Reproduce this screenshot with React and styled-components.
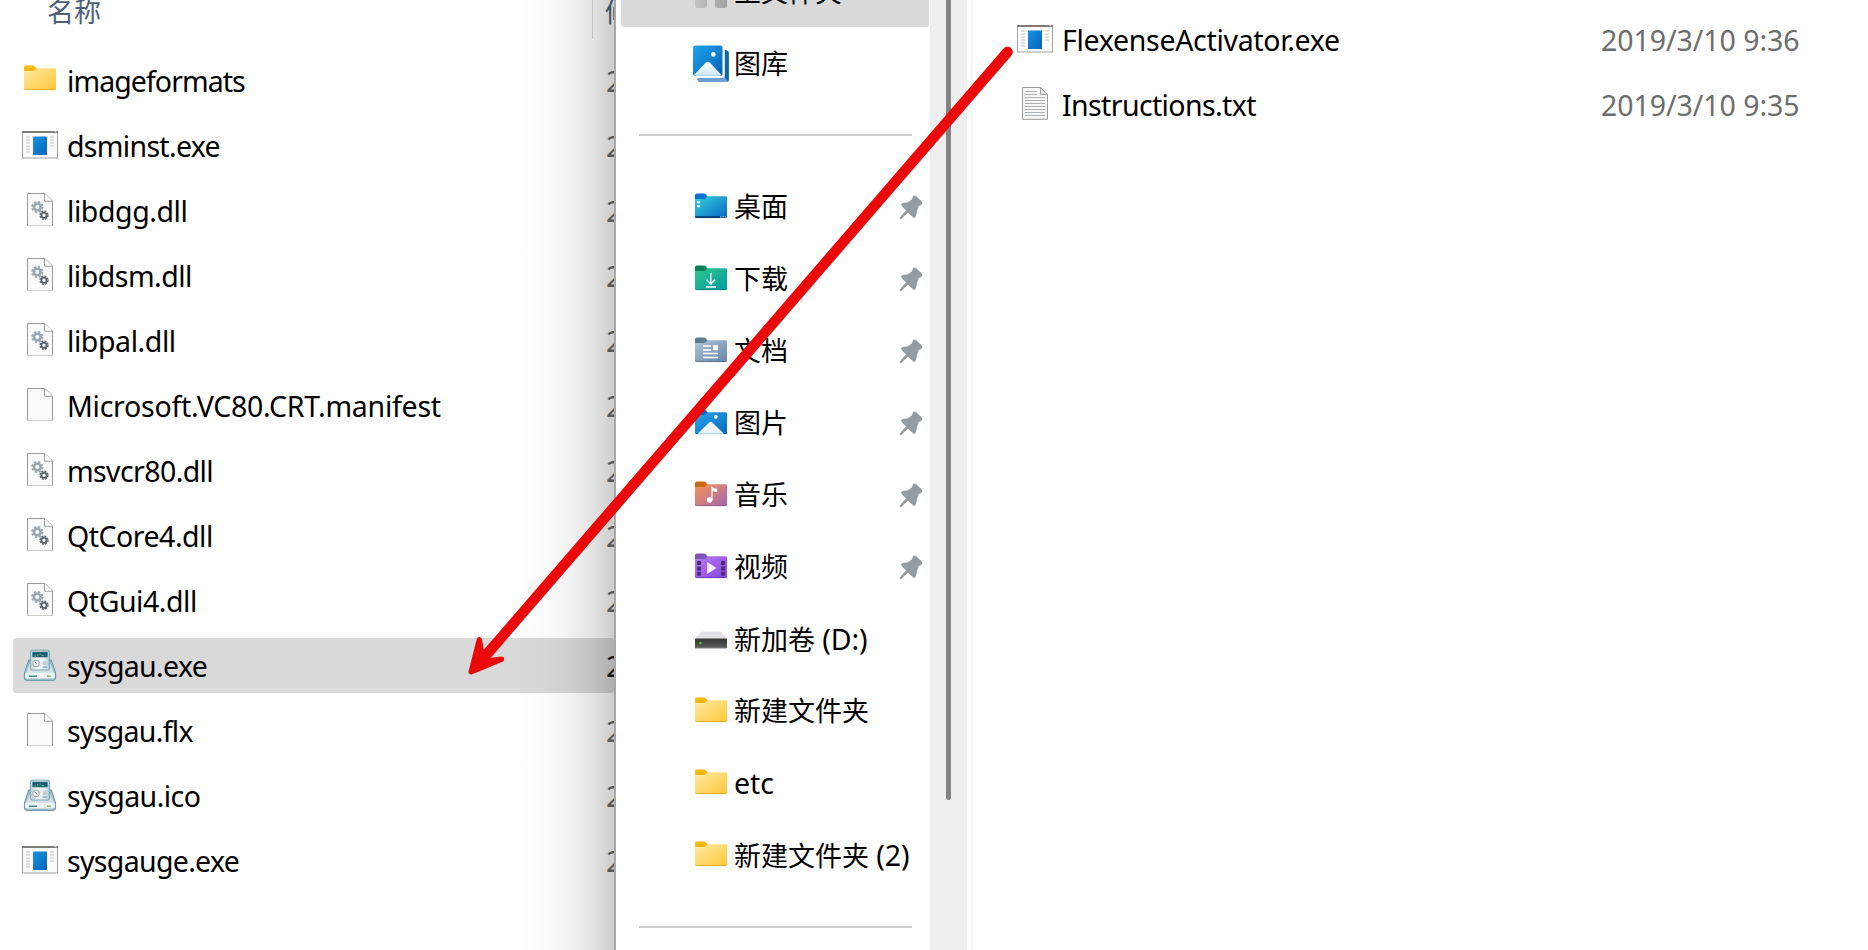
import React from 'react';
import styled, { createGlobalStyle } from 'styled-components';

// styling
const GlobalStyle = createGlobalStyle`
  * {
    box-sizing: border-box;
  }
  body {
    margin: 0;
    overflow: hidden;
    background-color: #ffffff;
    font-family: 'Noto Sans', 'Noto Sans CJK SC', sans-serif;
  }
  svg {
    display: block;
  }
`;
const Desktop = styled.div`
  position: relative;
  display: flex;
  width: 1868px;
  height: 950px;
  overflow: hidden;
  background-color: #ffffff;
`;
const FilesPane = styled.section`
  position: relative;
  flex: 0 0 614px;
  display: flex;
  flex-direction: column;
  overflow: hidden;
`;
const PaneShadow = styled.div`
  position: absolute;
  top: 0;
  right: 0;
  bottom: 0;
  width: 100px;
  background: linear-gradient(to right, rgba(0, 0, 0, 0) 0%, rgba(0, 0, 0, 0.015) 30%, rgba(0, 0, 0, 0.06) 60%, rgba(0, 0, 0, 0.12) 82%, rgba(0, 0, 0, 0.2) 100%);
`;
const HeaderRow = styled.div`
  flex: 0 0 39px;
  display: flex;
  color: #4c607a;
  font-size: 27px;
  line-height: 40px;
`;
const HeaderCell = styled.div`
  flex: 0 0 ${props => props.$width}px;
  margin-top: -8px;
  padding-left: ${props => props.$indent}px;
  border-right: 1px solid #dcdcdc;
  white-space: nowrap;
`;
const FileList = styled.div`
  display: flex;
  flex-direction: column;
  gap: 10px;
  padding: ${props => props.$padding};
`;
const FileRow = styled.div`
  flex: 0 0 55px;
  display: flex;
  align-items: center;
  border-radius: 3px;
  background-color: ${props => props.$selected ? '#d9d9d9' : 'transparent'};
`;
const IconSlot = styled.div`
  flex: 0 0 36px;
  display: flex;
  justify-content: center;
  min-width: 0;
  height: 36px;
  margin-bottom: 5px;
  margin-left: 9px;
  margin-right: 9px;

  svg {
    flex-shrink: 0;
  }
`;
const FileName = styled.div`
  flex: 0 0 ${props => props.$width}px;
  color: #000000;
  font-size: 28.5px;
  line-height: 40px;
  letter-spacing: ${props => props.$tracking || 0}px;
  white-space: nowrap;
`;
const FileDate = styled.div`
  color: ${props => props.$selected ? '#1c1c1c' : '#6d6d6d'};
  font-size: 28.5px;
  line-height: 40px;
  letter-spacing: -0.05px;
  white-space: nowrap;
`;
const Sidebar = styled.nav`
  flex: 0 0 316px;
  display: flex;
  flex-direction: column;
  border-left: 2px solid #a8a8a8;
  background-color: #ffffff;
`;
const NavRow = styled.div`
  flex: 0 0 ${props => props.$height || 72}px;
  display: flex;
  align-items: center;
  margin: ${props => props.$active ? '-43px' : 0} 1px 0 5px;
  padding-left: 71px;
  padding-right: 6px;
  border-radius: 3px;
  background-color: ${props => props.$active ? '#d9d9d9' : 'transparent'};
`;
const NavIcon = styled.div`
  flex: 0 0 38px;
  height: 38px;
`;
const NavLabel = styled.div`
  flex: 1;
  padding-left: 4px;
  color: #000000;
  font-size: 27px;
  line-height: 40px;
  white-space: nowrap;
`;
const Latin = styled.span`
  font-size: 28.5px;
  letter-spacing: -0.1px;
`;
const Divider = styled.hr`
  flex: 0 0 2px;
  width: 273px;
  margin: ${props => props.$margin};
  border: none;
  background-color: #d0d0d0;
`;
const ScrollTrack = styled.div`
  flex: 0 0 37px;
  padding-left: 16px;
  background-color: #efefef;
`;
const ScrollThumb = styled.div`
  width: 5px;
  height: 800px;
  border-radius: 0 0 3px 3px;
  background-color: #838383;
`;
const ActivatorPane = styled.section`
  flex: 1;
  margin-left: 3px;
  border-left: 3px solid #f7f7f7;
`;
const ArrowLayer = styled.svg`
  position: absolute;
  top: 0;
  left: 0;
`;

// icons
const FolderBase = ({ id, tab, from, to, edge, children }) => (
  <svg width="38" height="38" viewBox="0 0 38 38">
    <defs>
      <linearGradient id={id} x1="0" y1="0" x2="1" y2="1">
        <stop offset="0" stopColor={from} />
        <stop offset="1" stopColor={to} />
      </linearGradient>
    </defs>
    <path d="M3 7.2Q3 5.5 4.8 5.5H12Q13.2 5.5 14 6.5L15.3 8.3V12H3Z" fill={tab} />
    <path d="M3 11H12.5Q13.6 11 14.4 9.6L15.2 8.2H33.6Q35 8.2 35 9.6V28.6Q35 30 33.6 30H4.4Q3 30 3 28.6Z" fill={`url(#${id})`} />
    <path d="M3.3 28.6Q3.6 29.6 4.6 29.6H33.4Q34.4 29.6 34.7 28.6" fill="none" stroke={edge} strokeWidth="0.9" />
    {children}
  </svg>
);

const FolderIcon = () => <FolderBase id="folder" tab="#fdb813" from="#ffe9a3" to="#ffc937" edge="#dca32c" />;

const DesktopIcon = () => (
  <FolderBase id="desktop" tab="#0673d1" from="#33d2e3" to="#0a66c0" edge="#0a3c70">
    <path d="M5 13.3h3v2h-3zM5 17.3h3v2h-3z" fill="#ffffff" />
    <path d="M3.5 28.9H34.5" stroke="#093f73" strokeWidth="1.6" />
    <path d="M28 28.8h1.4M30.4 28.8h1.4M32.8 28.8h1.2" stroke="#9fd5f5" strokeWidth="1.2" />
  </FolderBase>
);

const DownloadIcon = () => (
  <FolderBase id="download" tab="#08835c" from="#2fc987" to="#0599a6" edge="#067b7e">
    <path d="M18.8 13V24M14.6 19.8L18.8 24L23 19.8M14 27H24" fill="none" stroke="#ffffff" strokeWidth="1.4" />
  </FolderBase>
);

const DocumentIcon = () => (
  <FolderBase id="document" tab="#5f7d8c" from="#b3c4d8" to="#6484a6" edge="#56748f">
    <path d="M11 14H19M11 18H19M11 21.5H26M11 25.5H26" stroke="#ffffff" strokeWidth="1.6" />
    <rect x="21" y="13.2" width="5" height="5" fill="#ffffff" />
  </FolderBase>
);

const PictureIcon = () => (
  <FolderBase id="picture" tab="#0668c4" from="#28a8ec" to="#0667bd" edge="#075aa3">
    <path d="M5.5 29.8L17.2 18.4Q18.7 17 20.2 18.4L32 29.8Z" fill="#eaf4fd" />
    <circle cx="23.8" cy="12.8" r="1.9" fill="#ffffff" />
  </FolderBase>
);

const MusicIcon = () => (
  <FolderBase id="music" tab="#cc6713" from="#fd9553" to="#a165ae" edge="#93557f">
    <path d="M20 12V24M20 12Q21 15 24.6 15.6V13.4Q21.5 13.4 20 11.4Z" fill="#ffffff" stroke="#ffffff" strokeWidth="1.2" />
    <circle cx="17.6" cy="23.7" r="2.8" fill="#ffffff" />
  </FolderBase>
);

const VideoIcon = () => (
  <FolderBase id="video" tab="#7f55b8" from="#b77af2" to="#8a43e2" edge="#6f33b5">
    <path d="M5 13h4v4h-4zM5 18.4h4v4h-4zM5 23.8h4v4h-4zM29 13h4v4h-4zM29 18.4h4v4h-4zM29 23.8h4v4h-4z" fill="#4b2d7c" />
    <path d="M15.2 14L24.5 20L15.2 26Z" fill="#f3ecfb" />
  </FolderBase>
);

const DriveIcon = () => (
  <svg width="38" height="38" viewBox="0 0 38 38">
    <defs>
      <linearGradient id="drive" x1="0" y1="0" x2="0" y2="1">
        <stop offset="0" stopColor="#333333" />
        <stop offset="1" stopColor="#606060" />
      </linearGradient>
    </defs>
    <path d="M9.5 11.6H28.5L35 18.6H3Z" fill="#dfe0e3" />
    <rect x="3" y="18.5" width="32" height="9.8" rx="0.8" fill="url(#drive)" />
    <path d="M3.3 28.2H34.7" stroke="#a8a8a8" strokeWidth="0.8" />
    <circle cx="8.3" cy="23" r="1.3" fill="#28e02c" />
  </svg>
);

const HomeIcon = () => (
  <svg width="38" height="38" viewBox="0 0 38 38">
    <defs>
      <linearGradient id="home" x1="0" y1="0" x2="1" y2="0">
        <stop offset="0" stopColor="#c4c4c4" />
        <stop offset="1" stopColor="#a2a2a2" />
      </linearGradient>
    </defs>
    <path d="M3 15L19 2L35 15V33Q35 35 33 35H25Q23 35 23 33V22H15V33Q15 35 13 35H5Q3 35 3 33Z" fill="url(#home)" />
  </svg>
);

const GalleryIcon = () => (
  <svg width="38" height="38" viewBox="0 0 38 38">
    <defs>
      <linearGradient id="gallery" x1="0" y1="0" x2="1" y2="1">
        <stop offset="0" stopColor="#1ea5ec" />
        <stop offset="1" stopColor="#0560b6" />
      </linearGradient>
      <linearGradient id="galleryHill" x1="0" y1="0" x2="0" y2="1">
        <stop offset="0" stopColor="#ffffff" />
        <stop offset="1" stopColor="#cfe6fa" />
      </linearGradient>
    </defs>
    <path d="M5.5 33.5H32.5V5Q36.9 5.2 36.9 8V34.5Q36.9 37 34.4 37H8.5Q5.5 37 5.5 33.5Z" fill="#0e62b2" />
    <path d="M5.5 32.8H33L36.3 36.5Q35.6 37 34.4 37H8.5Q5.5 37 5.5 32.8Z" fill="#6b9fd4" />
    <rect x="0" y="0" width="32.6" height="32.8" rx="3" fill="#ffffff" />
    <rect x="1" y="0.4" width="29.5" height="30.4" rx="2.6" fill="url(#gallery)" />
    <path d="M2 30L13.6 17.8Q15.8 15.8 18 17.8L29.5 30Q28.8 30.8 27.5 30.8H4Q2.7 30.8 2 30Z" fill="url(#galleryHill)" />
    <circle cx="21.3" cy="9.4" r="2.3" fill="#ffffff" />
  </svg>
);

const PinIcon = () => (
  <svg width="24" height="25" viewBox="0 0 24 25">
    <path d="M14.6 0.8Q15.8 0 17 1L22.8 6.8Q24 8.2 22.8 9.6Q21.6 10.5 19.8 11L17.8 16.6Q17.6 20 16.4 22.2Q15.4 23.6 14 22.2L8.9 17.4L2.2 24.2Q0.6 24.4 0.5 22.8L7 15.6L2.4 10.6Q1.4 9.4 3 8.6Q5.6 7.4 8 7.6L13 4.6Q13.4 2 14.6 0.8Z" fill="#929ca2" />
  </svg>
);

const ExeIcon = () => (
  <svg width="36" height="36" viewBox="0 0 36 36">
    <defs>
      <linearGradient id="exe" x1="0" y1="0" x2="1" y2="1">
        <stop offset="0" stopColor="#1793e2" />
        <stop offset="1" stopColor="#0561b8" />
      </linearGradient>
    </defs>
    <rect x="0.5" y="6.5" width="35" height="26.5" fill="#fafafa" stroke="#a2a2a2" />
    <path d="M0 7H36" stroke="#7e7c78" strokeWidth="2" />
    <path d="M32.5 6.8h2" stroke="#e0e0e0" strokeWidth="1" />
    <rect x="11" y="11.5" width="14" height="18.5" rx="0.6" fill="url(#exe)" />
    <path d="M4 12H8M4 15H8M4 18H8M4 21H8M4 24H8M4 27H8M28 12H32M28 15H32M28 18H32M28 21H32" stroke="#d8d8d8" strokeWidth="1.5" />
  </svg>
);

const PageIcon = ({ children }) => (
  <svg width="36" height="36" viewBox="0 0 36 36">
    <path d="M5.5 3.5H23L30.5 11V36.4H5.5Z" fill="#fafafa" stroke="#9b9b9b" />
    <path d="M5.2 35.6H30.8" stroke="#c9c9c9" strokeWidth="1" />
    <path d="M22.5 3.5V11.2H30.5" fill="#ffffff" stroke="#9b9b9b" />
    {children}
  </svg>
);

const DllIcon = () => (
  <PageIcon>
    <circle cx="15.3" cy="17" r="3.3" fill="none" stroke="#9aa6b0" strokeWidth="2.6" />
    <circle cx="15.3" cy="17" r="5.2" fill="none" stroke="#9aa6b0" strokeWidth="1.8" strokeDasharray="2.4 1.684" />
    <circle cx="22" cy="25.2" r="2.6" fill="none" stroke="#59636b" strokeWidth="1.8" />
    <circle cx="22" cy="25.2" r="4" fill="none" stroke="#59636b" strokeWidth="1.4" strokeDasharray="1.9 1.242" />
  </PageIcon>
);

const TextIcon = () => (
  <svg width="36" height="36" viewBox="0 0 36 36">
    <path d="M5.5 3.5H23.5L30.5 10.5V35.3H5.5Z" fill="#f6f6f6" stroke="#9b9b9b" />
    <path d="M23.5 3.5V10.5H30.5Z" fill="#e2e2e2" stroke="#a3a3a3" />
    <path d="M8 7.5H20M8 10.5H20M8 13.5H28M8 16.5H28M8 19.5H28M8 22.5H28M8 25.5H28M8 28.5H28M8 31.5H28" stroke="#aab0b3" strokeWidth="1.1" />
  </svg>
);

const GaugeIcon = () => (
  <svg width="36" height="37" viewBox="0 0 36 37">
    <defs>
      <linearGradient id="gauge" x1="0" y1="0" x2="1" y2="0">
        <stop offset="0" stopColor="#bdd2da" />
        <stop offset="0.3" stopColor="#f0f3f4" />
        <stop offset="0.75" stopColor="#e3eaed" />
        <stop offset="1" stopColor="#a9c5d0" />
      </linearGradient>
    </defs>
    <path d="M6.6 15H29.4L33.6 28V33Q33.6 35.4 31.2 35.4H4.8Q2.4 35.4 2.4 33V28Z" fill="#9dbdc9" stroke="#5b93a6" strokeWidth="0.9" />
    <path d="M8 18H28L31.8 27.4H4.2Z" fill="#d5e1e6" />
    <path d="M3.2 29Q3.2 27.4 4.8 27.4H31.2Q32.8 27.4 32.8 29V31.6Q32.8 33.4 31 33.4H5Q3.2 33.4 3.2 31.6Z" fill="#f1f5f6" />
    <rect x="8.4" y="5.2" width="19.2" height="19.8" rx="1.8" fill="url(#gauge)" stroke="#6d9dae" strokeWidth="0.9" />
    <rect x="10.4" y="6.8" width="15.2" height="5.4" rx="0.6" fill="#175f78" />
    <path d="M12.6 11h1.6M15 10h1.4M17.6 9h1.2M19.4 10.6h2.6" stroke="#6fa872" strokeWidth="1.3" />
    <circle cx="14" cy="18.4" r="3.2" fill="#fafafa" stroke="#a3adb2" strokeWidth="1.1" />
    <path d="M12.6 17L14.8 18.5" stroke="#7e8a90" />
    <circle cx="22.6" cy="18.2" r="1.9" fill="#c0c8cc" />
    <path d="M20.6 22H25" stroke="#58a6b8" strokeWidth="1.1" />
    <path d="M7 31.2H15" stroke="#3785a0" strokeWidth="1.5" />
    <path d="M25 31.2H29" stroke="#86c45e" strokeWidth="1.7" />
  </svg>
);

// data
const files = [
  { name: 'imageformats', icon: FolderIcon, tracking: -0.93 },
  { name: 'dsminst.exe', icon: ExeIcon, tracking: -0.68 },
  { name: 'libdgg.dll', icon: DllIcon, tracking: -0.42 },
  { name: 'libdsm.dll', icon: DllIcon, tracking: -0.5 },
  { name: 'libpal.dll', icon: DllIcon, tracking: -0.42 },
  { name: 'Microsoft.VC80.CRT.manifest', icon: PageIcon, tracking: -0.26 },
  { name: 'msvcr80.dll', icon: DllIcon, tracking: -0.6 },
  { name: 'QtCore4.dll', icon: DllIcon, tracking: -0.5 },
  { name: 'QtGui4.dll', icon: DllIcon, tracking: -0.46 },
  { name: 'sysgau.exe', icon: GaugeIcon, tracking: -0.65, selected: true },
  { name: 'sysgau.flx', icon: PageIcon, tracking: -0.7 },
  { name: 'sysgau.ico', icon: GaugeIcon, tracking: -0.55 },
  { name: 'sysgauge.exe', icon: ExeIcon, tracking: -0.68 },
];

const pinned = [
  { label: '桌面', icon: DesktopIcon, pin: true },
  { label: '下载', icon: DownloadIcon, pin: true },
  { label: '文档', icon: DocumentIcon, pin: true },
  { label: '图片', icon: PictureIcon, pin: true },
  { label: '音乐', icon: MusicIcon, pin: true },
  { label: '视频', icon: VideoIcon, pin: true },
  { label: '新加卷', latin: ' (D:)', icon: DriveIcon },
  { label: '新建文件夹', icon: FolderIcon },
  { latin: 'etc', icon: FolderIcon },
  { label: '新建文件夹', latin: ' (2)', icon: FolderIcon },
];

const activatorFiles = [
  { name: 'FlexenseActivator.exe', icon: ExeIcon, date: '2019/3/10 9:36', tracking: -0.3 },
  { name: 'Instructions.txt', icon: TextIcon, date: '2019/3/10 9:35', tracking: -0.62 },
];

const File = ({ name, icon: Icon, date, tracking, selected, nameWidth }) => (
  <FileRow $selected={selected}>
    <IconSlot><Icon /></IconSlot>
    <FileName $width={nameWidth} $tracking={tracking}>{name}</FileName>
    <FileDate $selected={selected}>{date}</FileDate>
  </FileRow>
);

const NavItem = ({ label, latin, icon: Icon, pin, active, height }) => (
  <NavRow $active={active} $height={height}>
    <NavIcon><Icon /></NavIcon>
    <NavLabel>{label}{latin && <Latin>{latin}</Latin>}</NavLabel>
    {pin && <PinIcon />}
  </NavRow>
);

const Arrow = () => (
  <ArrowLayer width="1868" height="950" viewBox="0 0 1868 950">
    <path d="M1007.5 52L481 661" stroke="#ea0808" strokeWidth="10.5" strokeLinecap="round" />
    <path d="M471.2 671.8L479.3 639.8L482 655L487.5 661L501.5 659.2Z" fill="#ea0808" stroke="#ea0808" strokeWidth="5.4" strokeLinejoin="round" />
  </ArrowLayer>
);

const App = () => (
  <Desktop>
    <GlobalStyle />
    <FilesPane>
      <HeaderRow>
        <HeaderCell $width={593} $indent={47}>名称</HeaderCell>
        <HeaderCell $width={180} $indent={12}>修改日期</HeaderCell>
      </HeaderRow>
      <FileList $padding="14px 0 0 13px">
        {files.map(file => <File key={file.name} {...file} date="2019" nameWidth={539} />)}
      </FileList>
      <PaneShadow />
    </FilesPane>
    <Sidebar>
      <NavItem label="主文件夹" icon={HomeIcon} active height={70} />
      <NavItem label="图库" icon={GalleryIcon} height={73} />
      <Divider $margin="34px 0 35px 23px" />
      {pinned.map((item, i) => <NavItem key={i} {...item} />)}
      <Divider $margin="35px 0 0 23px" />
    </Sidebar>
    <ScrollTrack>
      <ScrollThumb />
    </ScrollTrack>
    <ActivatorPane>
      <FileList $padding="12px 0 0 35px">
        {activatorFiles.map(file => <File key={file.name} {...file} nameWidth={539} />)}
      </FileList>
    </ActivatorPane>
    <Arrow />
  </Desktop>
);

export default App;
